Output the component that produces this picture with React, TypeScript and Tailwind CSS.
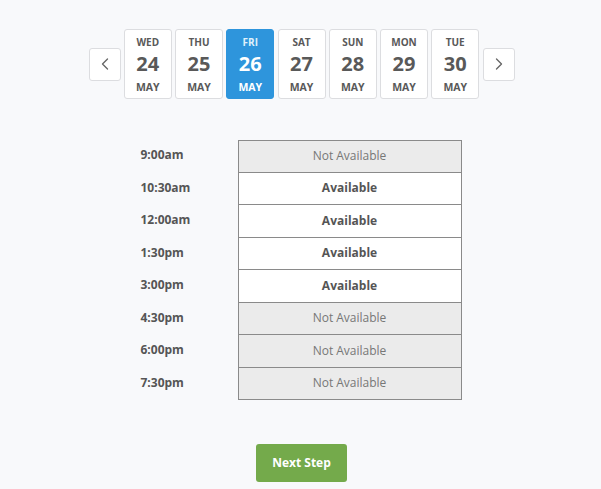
import { ChevronLeft, ChevronRight } from 'lucide-react';

const days = [
  { name: 'WED', num: 24 },
  { name: 'THU', num: 25 },
  { name: 'FRI', num: 26, active: true },
  { name: 'SAT', num: 27 },
  { name: 'SUN', num: 28 },
  { name: 'MON', num: 29 },
  { name: 'TUE', num: 30 },
];

const slots = [
  { time: '9:00am', ok: false },
  { time: '10:30am', ok: true },
  { time: '12:00am', ok: true },
  { time: '1:30pm', ok: true },
  { time: '3:00pm', ok: true },
  { time: '4:30pm', ok: false },
  { time: '6:00pm', ok: false },
  { time: '7:30pm', ok: false },
];

const App = () => (
  <div
    className="w-[601px] h-[489px] bg-[#f8f9fb] text-[#555] overflow-hidden"
    style={{ fontFamily: '"Open Sans", "Liberation Sans", sans-serif' }}
  >
    {/* date picker */}
    <div className="flex items-center justify-center gap-[3.25px] pt-[29px] pl-[2px]">
      <button className="w-[32px] h-[33px] flex items-center justify-center bg-white border border-[#dcdde0] rounded-[3px] text-[#666]">
        <ChevronLeft size={20} strokeWidth={1.6} />
      </button>
      {days.map((d) => (
        <div
          key={d.num}
          className={
            d.active
              ? 'w-[48px] h-[70px] flex flex-col items-center rounded-[3px] bg-[#2e95dc] border border-[#2e95dc] text-white'
              : 'w-[48px] h-[70px] flex flex-col items-center rounded-[3px] bg-white border border-[#dcdde0] text-[#595959]'
          }
        >
          <span className={d.active ? 'mt-[5px] text-[10px] font-bold leading-[14px] text-[#dff0fb]' : 'mt-[5px] text-[10px] font-bold leading-[14px]'}>{d.name}</span>
          <span className="mt-[1px] text-[20px] font-bold leading-[28px]">{d.num}</span>
          <span className="mt-[2px] text-[10.5px] font-bold leading-[14px]">MAY</span>
        </div>
      ))}
      <button className="w-[32px] h-[33px] flex items-center justify-center bg-white border border-[#dcdde0] rounded-[3px] text-[#666]">
        <ChevronRight size={20} strokeWidth={1.6} />
      </button>
    </div>

    {/* time slots */}
    <div className="flex justify-center mt-[41px]">
      <div className="flex flex-col ml-[1px]">
        {slots.map((s, i) => (
          <div key={s.time} className="flex">
            <div className="w-[97px] flex items-center pb-[2px] text-[12px] font-bold text-[#555]">{s.time}</div>
            <div
              className={
                (s.ok ? 'bg-white font-bold text-[#555] ' : 'bg-[#ebebeb] text-[#777] ') +
                (i === 0 ? 'border-t ' : '') +
                'w-[224px] h-[32.5px] flex items-center justify-center border-x border-b border-[#8a8a8a] text-[12px]'
              }
            >
              {s.ok ? 'Available' : 'Not Available'}
            </div>
          </div>
        ))}
      </div>
    </div>

    <div className="flex justify-center mt-[44px] pl-[2px]">
      <button className="w-[91px] h-[38px] rounded-[3px] bg-[#74aa4b] text-white text-[12px] font-bold">Next Step</button>
    </div>
  </div>
);

export default App;
